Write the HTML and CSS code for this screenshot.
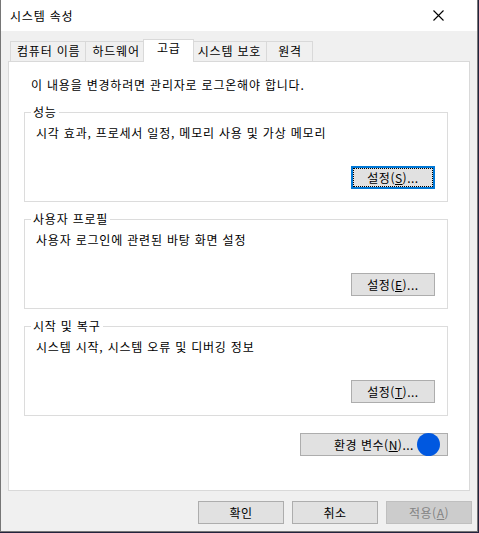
FILE: index.html
```html
<!DOCTYPE html>
<html lang="ko">
<head>
<meta charset="utf-8">
<title>시스템 속성</title>
<link rel="stylesheet" href="styles.css">
</head>
<body>
<div class="window">
  <div class="titlebar">
    <span class="title">시스템 속성</span>
    <svg class="close" width="11" height="11" viewBox="0 0 11 11"><path d="M0.5 0.5 L10.5 10.5 M10.5 0.5 L0.5 10.5" stroke="#000" stroke-width="1.1" fill="none"/></svg>
  </div>
  <div class="content">
    <div class="tabs">
      <div class="tab">컴퓨터 이름</div>
      <div class="tab">하드웨어</div>
      <div class="tab active">고급</div>
      <div class="tab">시스템 보호</div>
      <div class="tab">원격</div>
    </div>
    <div class="panel">
      <p class="intro">이 내용을 변경하려면 관리자로 로그온해야 합니다.</p>
      <fieldset class="group">
        <legend>성능</legend>
        <p class="desc">시각 효과, 프로세서 일정, 메모리 사용 및 가상 메모리</p>
        <div class="row"><button class="btn focus">설정(<u>S</u>)...</button></div>
      </fieldset>
      <fieldset class="group">
        <legend>사용자 프로필</legend>
        <p class="desc">사용자 로그인에 관련된 바탕 화면 설정</p>
        <div class="row"><button class="btn">설정(<u>E</u>)...</button></div>
      </fieldset>
      <fieldset class="group">
        <legend>시작 및 복구</legend>
        <p class="desc">시스템 시작, 시스템 오류 및 디버깅 정보</p>
        <div class="row"><button class="btn">설정(<u>T</u>)...</button></div>
      </fieldset>
      <div class="env-row">
        <button class="btn env">환경 변수(<u>N</u>)...</button>
        <span class="dot"></span>
      </div>
    </div>
  </div>
  <div class="footer">
    <button class="btn wide">확인</button>
    <button class="btn wide">취소</button>
    <button class="btn wide disabled">적용(<u>A</u>)</button>
  </div>
</div>
</body>
</html>
```
FILE: styles.css
```css
html, body {
  margin: 0;
  padding: 0;
}
body {
  background: #23233d;
  width: 479px;
  height: 533px;
  font-family: "Noto Sans CJK KR", "Noto Sans", sans-serif;
  font-size: 12px;
  letter-spacing: 0.8px;
  color: #000;
}
.window {
  width: 478px;
  height: 532px;
  box-sizing: border-box;
  border: 1px solid #767676;
  border-top: none;
  background: #f0f0f0;
  display: flex;
  flex-direction: column;
}
.titlebar {
  height: 31px;
  flex: none;
  background: #fff;
  display: flex;
  align-items: center;
  justify-content: space-between;
  padding: 0 33px 0 9px;
  box-sizing: border-box;
}
.title {
  line-height: 16px;
}
.close {
  display: block;
}
.content {
  padding: 8px 7px 0 7px;
}
.tabs {
  display: flex;
  align-items: flex-end;
  height: 22px;
  padding-left: 2px;
}
.tab {
  height: 20px;
  box-sizing: border-box;
  min-width: 47px;
  padding: 1px 5px 0 6px;
  line-height: 16px;
  text-align: center;
  border: 1px solid #d9d9d9;
  border-bottom: none;
  margin-left: -1px;
  background: #f0f0f0;
  white-space: nowrap;
}
.tab:first-child {
  margin-left: 0;
}
.tab.active {
  height: 23px;
  margin: 0 -2px -1px -3px;
  padding-top: 0;
  background: #fff;
  position: relative;
  z-index: 1;
  min-width: 51px;
}
.panel {
  background: #fff;
  border: 1px solid #d9d9d9;
  height: 430px;
  box-sizing: border-box;
  padding: 15px 21px 0 15px;
}
.intro {
  margin: 0 0 0 7px;
  line-height: 16px;
}
.group {
  margin: 11px 0 0 0;
  padding: 0 12px 12px 11px;
  border: 1px solid #dcdcdc;
  min-width: 0;
}
.group + .group {
  margin-top: 9px;
}
.group legend {
  margin-left: -5px;
  padding: 0 2px;
  line-height: 16px;
}
.desc {
  margin: 5px 0 0 0;
  line-height: 16px;
}
.row {
  display: flex;
  justify-content: flex-end;
  margin-top: 25px;
}
.btn {
  font-family: "Noto Sans CJK KR", "Noto Sans", sans-serif;
  font-size: 12px;
  letter-spacing: 0.5px;
  color: #000;
  height: 23px;
  width: 84px;
  box-sizing: border-box;
  border: 1px solid #adadad;
  background: #e1e1e1;
  padding: 0;
  line-height: 16px;
  border-radius: 0;
}
.btn.focus {
  border: 2px solid #0078d7;
  outline: 1px dotted #000;
  outline-offset: -3px;
}
.env-row {
  position: relative;
  display: flex;
  justify-content: flex-end;
  margin-top: 17px;
}
.btn.env {
  width: 148px;
}
.dot {
  position: absolute;
  right: 8px;
  top: 0;
  width: 23px;
  height: 23px;
  border-radius: 50%;
  background: #0058e0;
}
.footer {
  display: flex;
  justify-content: flex-end;
  gap: 8px;
  padding: 10px 5px 0 0;
}
.btn.wide {
  width: 86px;
}
.btn.disabled {
  background: #cccccc;
  border-color: #bfbfbf;
  color: #838383;
}
```
